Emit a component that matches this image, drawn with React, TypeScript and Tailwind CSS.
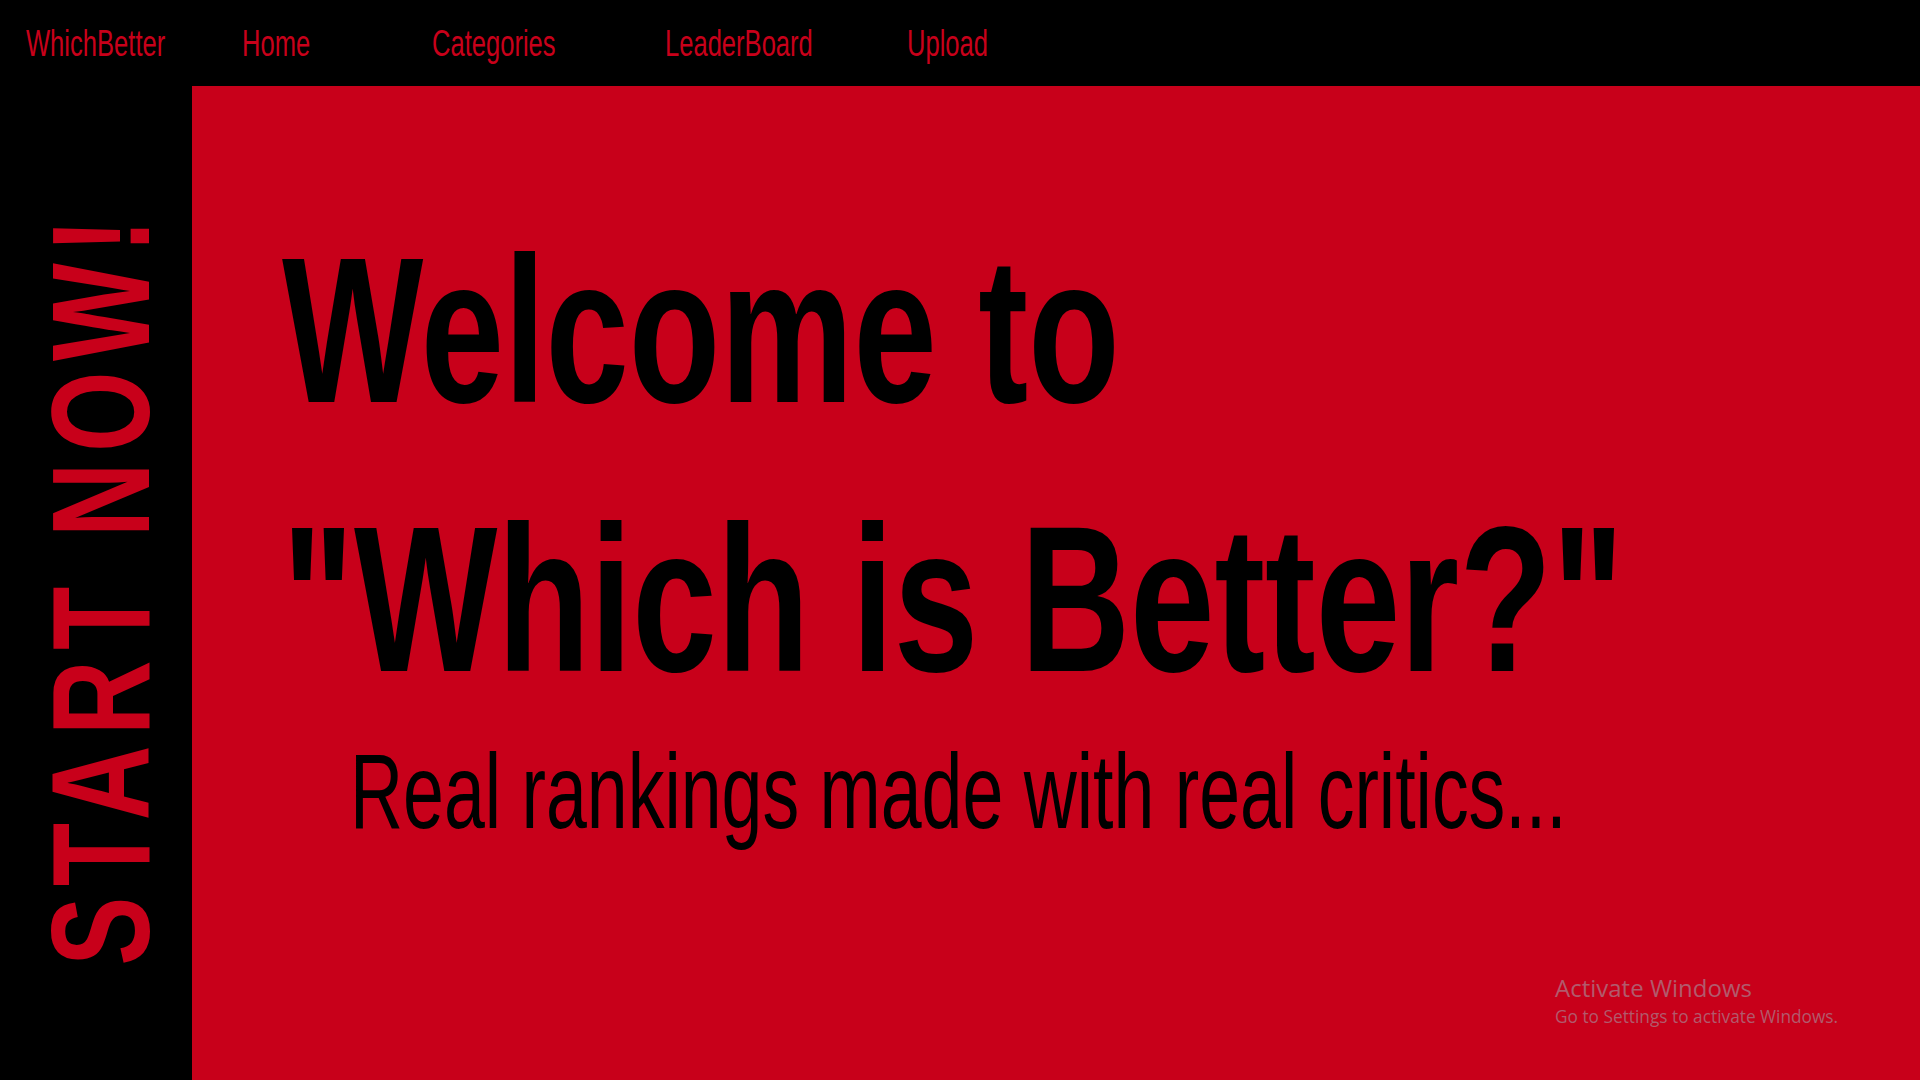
const sans = "font-['Liberation_Sans',Arial,sans-serif]";

const links = [
  { label: 'WhichBetter', width: 'w-[216px]' },
  { label: 'Home', width: 'w-[190px]' },
  { label: 'Categories', width: 'w-[233px]' },
  { label: 'LeaderBoard', width: 'w-[242px]' },
  { label: 'Upload', width: 'w-[200px]' },
];

export default function App() {
  return (
    <div className={`relative flex h-screen w-full flex-col overflow-hidden bg-black ${sans}`}>
      {/* top nav */}
      <nav className="flex h-[86px] shrink-0 items-center pl-[26px] pt-[2px]">
        {links.map((l) => (
          <a key={l.label} href="#" className={`${l.width} shrink-0 text-[36px] leading-none text-[#c8001a]`}>
            <span className="inline-block origin-left scale-x-[0.71]">{l.label}</span>
          </a>
        ))}
      </nav>

      <div className="flex min-h-0 flex-1">
        {/* side banner */}
        <aside className="flex min-h-0 w-[192px] shrink-0 items-center justify-center pl-[10px] pt-[8px]">
          <span className="shrink-0 rotate-180 scale-y-[0.74] text-[140px] font-bold leading-none tracking-[14px] whitespace-nowrap text-[#c8001a] [writing-mode:vertical-rl]">
            START NOW!
          </span>
        </aside>

        {/* hero */}
        <main className="flex-1 bg-[#c8001a] pl-[90px] pt-[110px] text-black">
          <h1 className="text-[208px] font-bold leading-[269px] whitespace-nowrap">
            <span className="inline-block origin-left scale-x-[0.72]">Welcome to</span>
            <br />
            <span className="inline-block origin-left scale-x-[0.73]">"Which is Better?"</span>
          </h1>
          <p className="-mt-[4px] pl-[68px] text-[106px] leading-[122px] whitespace-nowrap">
            <span className="inline-block origin-left scale-x-[0.693]">Real rankings made with real critics...</span>
          </p>
        </main>
      </div>

      {/* windows watermark */}
      <div className="absolute left-[1555px] top-[972px] font-['Open_Sans',sans-serif] text-[#b25a6c]">
        <div className="text-[24px] leading-[32px]">Activate Windows</div>
        <div className="text-[17.3px] leading-[26px]">Go to Settings to activate Windows.</div>
      </div>
    </div>
  );
}
